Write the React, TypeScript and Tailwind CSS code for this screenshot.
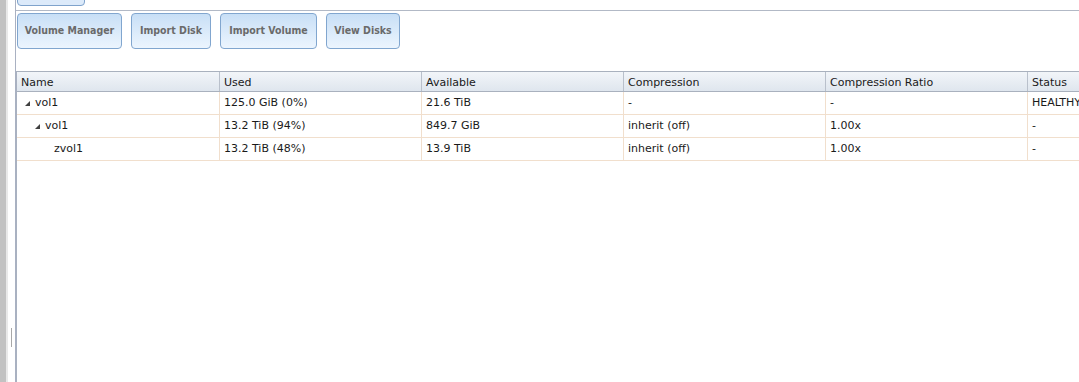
const buttons = [
  { label: 'Volume Manager', width: 'w-[105px]' },
  { label: 'Import Disk', width: 'w-[80px]' },
  { label: 'Import Volume', width: 'w-[97px]' },
  { label: 'View Disks', width: 'w-[74px]' },
];

const columns = ['Name', 'Used', 'Available', 'Compression', 'Compression Ratio', 'Status'];

type Row = {
  name: string;
  depth: number;
  expanded?: boolean;
  cells: string[];
};

const rows: Row[] = [
  { name: 'vol1', depth: 0, expanded: true, cells: ['125.0 GiB (0%)', '21.6 TiB', '-', '-', 'HEALTHY'] },
  { name: 'vol1', depth: 1, expanded: true, cells: ['13.2 TiB (94%)', '849.7 GiB', 'inherit (off)', '1.00x', '-'] },
  { name: 'zvol1', depth: 2, cells: ['13.2 TiB (48%)', '13.9 TiB', 'inherit (off)', '1.00x', '-'] },
];

const Triangle = () => (
  <svg width="5" height="5" viewBox="0 0 5 5" className="shrink-0">
    <path d="M5 0 L5 5 L0 5 Z" fill="#404040" />
  </svg>
);

const indent = ['pl-[8px]', 'pl-[18px]', 'pl-[37px]'];

export default function App() {
  return (
    <div
      className="flex w-[1079px] h-[382px] overflow-hidden bg-white text-[11px]"
      style={{ fontFamily: 'Tahoma, "DejaVu Sans", Verdana, sans-serif' }}
    >
      {/* left splitter strip */}
      <div className="flex shrink-0">
        <div className="w-[6px] bg-[#c2c2c2]" />
        <div className="w-[2px] bg-[#e9e9e9]" />
        <div className="w-[7px] bg-white flex items-end pb-[35px] pl-[3px]">
          <div className="w-px h-[19px] bg-[#a8a8a8]" />
        </div>
        <div className="w-px bg-[#a9b1c2]" />
      </div>

      {/* main panel */}
      <div className="flex-1 min-w-0 flex flex-col">
        <div className="shrink-0 h-[11px] border-b border-[#b2b9c6] pl-[1px]">
          <div className="w-[68px] h-[7px] -mt-px border border-[#7fa3cc] rounded-b-[4px] bg-[#dceafa]" />
        </div>

        <div className="shrink-0 flex gap-[9px] pl-[1px] pt-[2px] h-[60px]">
          {buttons.map((b) => (
            <button
              key={b.label}
              type="button"
              className={`${b.width} h-[36px] rounded-[4px] border border-[#81a6cf] bg-gradient-to-b from-[#c8dff6] to-[#ecf5fe] text-[10.5px] font-bold text-[#6a6a6a] whitespace-nowrap`}
              style={{ fontFamily: '"DejaVu Sans Condensed", "Noto Sans", sans-serif' }}
            >
              {b.label}
            </button>
          ))}
        </div>

        {/* grid */}
        <div className="shrink-0 border-l border-[#a9b1c0]">
          <div className="flex h-[21px] border-t border-b border-[#a9b1be] bg-gradient-to-b from-[#f2f5f9] to-[#dfe6ee]">
            {columns.map((c, i) => (
              <div
                key={c}
                className={`w-[202px] shrink-0 flex items-center pl-[4px] pt-[3px] text-[#1a1a1a] ${i > 0 ? 'border-l border-[#b9c0cb]' : ''}`}
              >
                {c}
              </div>
            ))}
          </div>
          {rows.map((r, ri) => (
            <div key={ri} className="flex h-[23px] border-b border-[#f1dfcd]">
              <div className={`w-[202px] shrink-0 flex items-center gap-[5px] ${indent[r.depth]} text-[#1a1a1a]`}>
                {r.expanded && <Triangle />}
                <span>{r.name}</span>
              </div>
              {r.cells.map((cell, ci) => (
                <div
                  key={ci}
                  className="w-[202px] shrink-0 flex items-center pl-[4px] border-l border-[#f1dfcd] text-[#1a1a1a] whitespace-nowrap"
                >
                  {cell}
                </div>
              ))}
            </div>
          ))}
        </div>
        <div className="flex-1 border-l border-[#a9b1c0]" />
      </div>
    </div>
  );
}
